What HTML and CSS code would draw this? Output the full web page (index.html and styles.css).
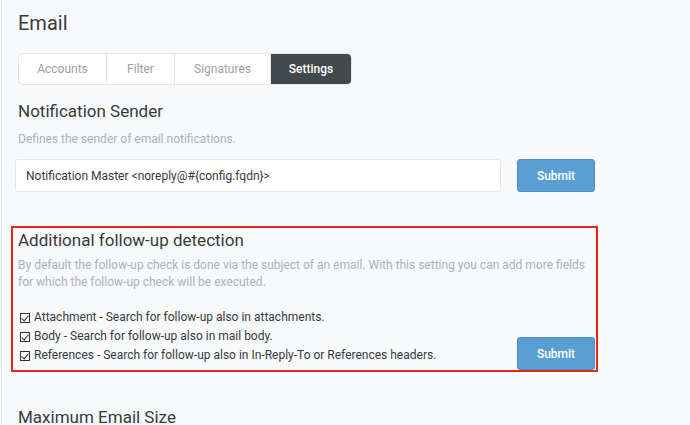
FILE: index.html
```html
<!DOCTYPE html>
<html lang="en">
<head>
<meta charset="UTF-8" />
<title>Email settings</title>
<link rel="stylesheet" href="styles.css">
</head>
<body>

<div class="page">
  <h1>Email</h1>

  <div class="tabs">
    <a class="tab">Accounts</a>
    <a class="tab">Filter</a>
    <a class="tab">Signatures</a>
    <a class="tab active">Settings</a>
  </div>

  <div class="setting">
    <h2>Notification Sender</h2>
    <p class="hint">Defines the sender of email notifications.</p>
    <div class="row">
      <input class="field" type="text" value="Notification Master <noreply@#{config.fqdn}>" />
      <button class="btn">Submit</button>
    </div>
  </div>

  <!-- highlighted setting -->
  <div class="setting marked">
    <h2>Additional follow-up detection</h2>
    <p class="hint">By default the follow-up check is done via the subject of an email. With this setting you can add more fields for which the follow-up check will be executed.</p>
    <div class="row bottom">
      <ul class="checks">
        <li><span class="box"></span>Attachment - Search for follow-up also in attachments.</li>
        <li><span class="box"></span>Body - Search for follow-up also in mail body.</li>
        <li><span class="box"></span>References - Search for follow-up also in In-Reply-To or References headers.</li>
      </ul>
      <button class="btn">Submit</button>
    </div>
  </div>

  <div class="setting">
    <h2>Maximum Email Size</h2>
  </div>
</div>

</body>
</html>
```

FILE: styles.css
```css
/* --- basics --- */
* {
  margin: 0; padding: 0; box-sizing: border-box;
}
html, body {
  height: 100%;
  overflow: hidden;
}
body {
  background: #f8f9fa;
  font-family: 'Roboto', 'Open Sans', sans-serif;
  color: #38393b;
}

.page {
  margin-left: 1px;
  border-left: 1px solid #e6e7e9;
  min-height: 100%;
  padding: 9px 0 0 13px;
  width: 595px;
}

h1 {
  font-size: 20px;
  font-weight: 400;
  line-height: 28px;
  margin-left: 3px;
}

h2 {
  font-size: 17px;
  font-weight: 400;
  line-height: 24px;
  margin-left: 3px;
}

.hint {
  font-size: 12px;
  line-height: 17px;
  color: #a4b4c0;
  margin-left: 3px;
}

/* --- tabs --- */
.tabs {
  display: flex;
  margin: 16px 0 0 3px;
  width: 334px;
  height: 32px;
  border: 1px solid #e4e5e7;
  border-radius: 5px;
  background: #fff;
  overflow: hidden;
}
.tab {
  display: flex;
  align-items: center;
  justify-content: center;
  font-size: 12px;
  color: #a0a0a0;
  border-right: 1px solid #e4e5e7;
}
.tab:nth-child(1) { width: 88px; }
.tab:nth-child(2) { width: 68px; }
.tab:nth-child(3) { width: 96px; }
.tab.active {
  flex: 1;
  border-right: none;
  background: #43484c;
  color: #fff;
  font-weight: 500;
}

/* --- settings --- */
.setting {
  margin-top: 14px;
}
.setting .hint {
  margin-top: 8px;
}

.row {
  display: flex;
  gap: 16px;
  margin-top: 11px;
}
.row.bottom {
  align-items: flex-end;
  justify-content: space-between;
  margin-top: 17px;
}

.field {
  width: 486px;
  height: 33px;
  border: 1px solid #e6e7e9;
  border-radius: 3px;
  background: #fff;
  padding: 0 10px;
  font-family: inherit;
  font-size: 12px;
  color: #38393b;
}

.btn {
  width: 78px;
  height: 33px;
  background: #5a9fd4;
  border: 1px solid #4b8cc2;
  border-radius: 3px;
  color: #fff;
  font-family: inherit;
  font-size: 12px;
  font-weight: 500;
}

/* red annotation frame */
.setting.marked {
  margin: 34px 0 0 -4px;
  width: 587px;
  border: 2px solid #e8251a;
  padding: 0 1px 0 2px;
}
.setting.marked .hint {
  margin-top: 5px;
}

.checks {
  list-style: none;
  margin-left: 5px;
  font-size: 12px;
  line-height: 19px;
  padding-bottom: 5px;
}
.checks li {
  display: flex;
  align-items: center;
}
.box {
  position: relative;
  width: 10px;
  height: 10px;
  border: 1px solid #333;
  margin-right: 4px;
}
.box::after {
  content: '';
  position: absolute;
  left: 2px; top: 0;
  width: 3px; height: 6px;
  border: solid #333;
  border-width: 0 1.5px 1.5px 0;
  transform: rotate(40deg);
}

.setting:last-child {
  margin-top: 33px;
}
```
